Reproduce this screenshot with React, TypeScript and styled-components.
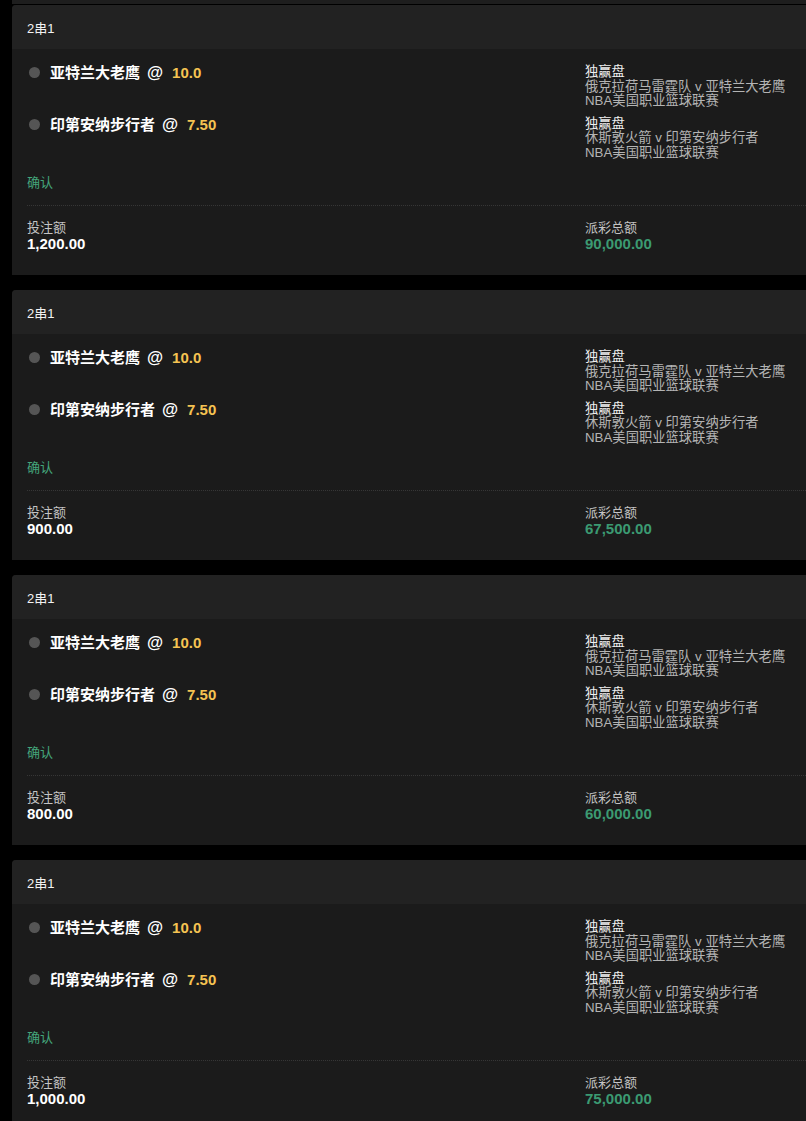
import React from "react";
import styled, { createGlobalStyle } from "styled-components";

const Global = createGlobalStyle`
  html, body { margin: 0; padding: 0; background: #000; }
  body { font-family: "Liberation Sans", "Noto Sans CJK SC", Arial, sans-serif; color: #fff; }
  * { box-sizing: border-box; }
`;

const Page = styled.div`
  background: #000;
  min-height: 1121px;
  padding-left: 12px;
  display: flex;
  flex-direction: column;
  gap: 15px;
`;

const TopTail = styled.div`
  height: 4px;
  background: #1e1e1e;
  margin-bottom: -14px;
`;

const Card = styled.section`
  background: #1b1b1b;
  border-top-left-radius: 4px;
  overflow: hidden;
`;

const Header = styled.div`
  height: 44px;
  background: #222222;
  padding: 0 15px;
  display: flex;
  align-items: center;
  font-size: 13px;
  color: #f2f2f2;
`;

const Body = styled.div`
  padding: 16px 15px 23px;
`;

const Selections = styled.div`
  display: flex;
  flex-direction: column;
  gap: 8px;
`;

const SelRow = styled.div`
  display: grid;
  grid-template-columns: 558px 1fr;
  align-items: start;
`;

const SelLeft = styled.div`
  display: flex;
  align-items: baseline;
  height: 15px;
  line-height: 15px;
  font-size: 15px;
  font-weight: 700;
  white-space: nowrap;
`;

const Dot = styled.span`
  align-self: center;
  width: 11px;
  height: 11px;
  border-radius: 50%;
  background: #555;
  margin-left: 2px;
  margin-right: 10px;
  flex: none;
`;

const Name = styled.span`
  color: #fff;
`;

const At = styled.span`
  color: #fff;
  font-size: 16.5px;
  margin-left: 7px;
`;

const Odds = styled.span`
  color: #f5c352;
  margin-left: 9px;
`;

const SelRight = styled.div`
  display: flex;
  flex-direction: column;
  font-size: 13.3px;
  line-height: 14.5px;
  white-space: nowrap;
`;

const Market = styled.span`
  color: #f0f0f0;
`;

const Sub = styled.span`
  color: #b4b4b4;
`;

const Status = styled.div`
  margin-top: 15px;
  font-size: 13px;
  line-height: 15px;
  color: #44a67b;
`;

const Divider = styled.div`
  margin-top: 15px;
  border-top: 1px dotted #363636;
  margin-right: -15px;
`;

const Totals = styled.div`
  margin-top: 14px;
  display: grid;
  grid-template-columns: 558px 1fr;
`;

const TotalCol = styled.div`
  display: flex;
  flex-direction: column;
`;

const TotalLabel = styled.span`
  font-size: 13px;
  line-height: 16px;
  color: #c4c4c4;
`;

const TotalValue = styled.span<{ $win?: boolean }>`
  font-size: 15px;
  line-height: 16px;
  font-weight: 700;
  color: ${(p) => (p.$win ? "#3b9a72" : "#ffffff")};
`;

type Sel = { name: string; odds: string; match: string };

const sels: Sel[] = [
  { name: "亚特兰大老鹰", odds: "10.0", match: "俄克拉荷马雷霆队 v 亚特兰大老鹰" },
  { name: "印第安纳步行者", odds: "7.50", match: "休斯敦火箭 v 印第安纳步行者" },
];

const bets = [
  { stake: "1,200.00", payout: "90,000.00" },
  { stake: "900.00", payout: "67,500.00" },
  { stake: "800.00", payout: "60,000.00" },
  { stake: "1,000.00", payout: "75,000.00" },
];

function BetCard({ stake, payout }: { stake: string; payout: string }) {
  return (
    <Card>
      <Header>2串1</Header>
      <Body>
        <Selections>
          {sels.map((s) => (
            <SelRow key={s.name}>
              <SelLeft>
                <Dot />
                <Name>{s.name}</Name>
                <At>@</At>
                <Odds>{s.odds}</Odds>
              </SelLeft>
              <SelRight>
                <Market>独赢盘</Market>
                <Sub>{s.match}</Sub>
                <Sub>NBA美国职业篮球联赛</Sub>
              </SelRight>
            </SelRow>
          ))}
        </Selections>
        <Status>确认</Status>
        <Divider />
        <Totals>
          <TotalCol>
            <TotalLabel>投注额</TotalLabel>
            <TotalValue>{stake}</TotalValue>
          </TotalCol>
          <TotalCol>
            <TotalLabel>派彩总额</TotalLabel>
            <TotalValue $win>{payout}</TotalValue>
          </TotalCol>
        </Totals>
      </Body>
    </Card>
  );
}

export default function App() {
  return (
    <>
      <Global />
      <Page>
        <TopTail />
        {bets.map((b, i) => (
          <BetCard key={i} stake={b.stake} payout={b.payout} />
        ))}
      </Page>
    </>
  );
}
